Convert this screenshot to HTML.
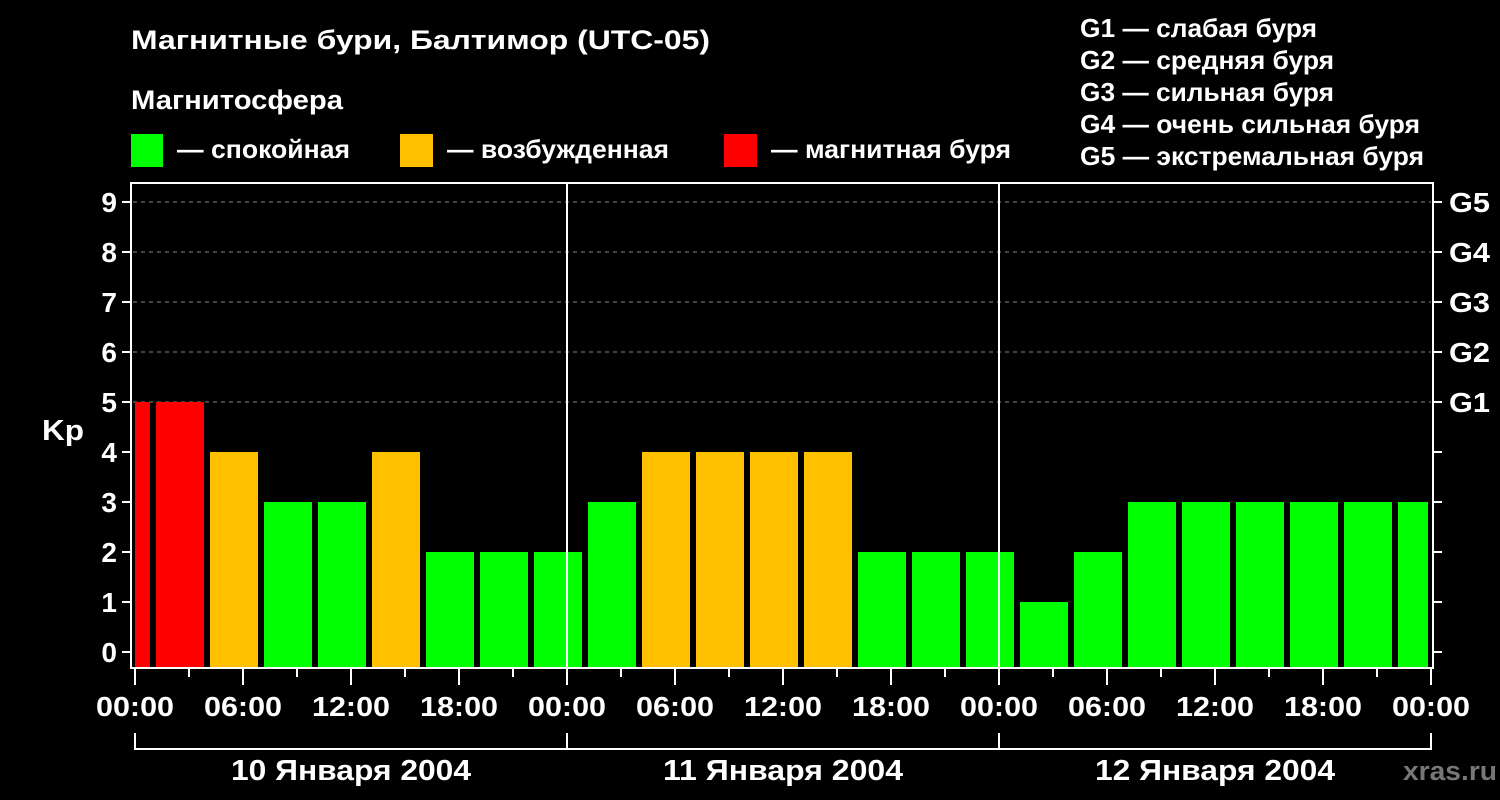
<!DOCTYPE html><html><head><meta charset="utf-8"><style>body{margin:0;background:#000;width:1500px;height:800px;overflow:hidden}svg{display:block}text{font-family:"Liberation Sans",sans-serif;font-weight:bold;fill:#fff}</style></head><body>
<svg width="1500" height="800" viewBox="0 0 1500 800">
<rect width="1500" height="800" fill="#000"/>
<text x="131" y="49" font-size="27" textLength="579" lengthAdjust="spacingAndGlyphs">Магнитные бури, Балтимор (UTC-05)</text>
<text x="131" y="109" font-size="27" textLength="212" lengthAdjust="spacingAndGlyphs">Магнитосфера</text>
<rect x="131" y="134" width="32" height="33" fill="#00ff00"/><text x="177" y="158" font-size="26" textLength="173" lengthAdjust="spacingAndGlyphs">— спокойная</text>
<rect x="400" y="134" width="33" height="33" fill="#ffc000"/><text x="447" y="158" font-size="26" textLength="222" lengthAdjust="spacingAndGlyphs">— возбужденная</text>
<rect x="724" y="134" width="33" height="33" fill="#ff0000"/><text x="771" y="158" font-size="26" textLength="240" lengthAdjust="spacingAndGlyphs">— магнитная буря</text>
<g font-size="26" lengthAdjust="spacingAndGlyphs"><text x="1080" y="37" textLength="237" lengthAdjust="spacingAndGlyphs">G1 — слабая буря</text><text x="1080" y="69" textLength="254" lengthAdjust="spacingAndGlyphs">G2 — средняя буря</text><text x="1080" y="101" textLength="254" lengthAdjust="spacingAndGlyphs">G3 — сильная буря</text><text x="1080" y="133" textLength="340" lengthAdjust="spacingAndGlyphs">G4 — очень сильная буря</text><text x="1080" y="165" textLength="344" lengthAdjust="spacingAndGlyphs">G5 — экстремальная буря</text></g>
<g stroke="#888" stroke-dasharray="4,4" stroke-width="1">
<line x1="133" y1="202" x2="1431" y2="202"/><line x1="133" y1="252" x2="1431" y2="252"/><line x1="133" y1="302" x2="1431" y2="302"/><line x1="133" y1="352" x2="1431" y2="352"/><line x1="133" y1="402" x2="1431" y2="402"/></g>
<g id="bars"></g>
<g stroke="#fff" stroke-width="2" fill="none">
<rect x="131" y="183" width="1302" height="485"/>
<line x1="567" y1="183" x2="567" y2="668"/><line x1="999" y1="183" x2="999" y2="668"/>
<path d="M135 733V749H1431V733M567 733V749M999 733V749"/>
</g>
<text x="42" y="440" font-size="29" textLength="42" lengthAdjust="spacingAndGlyphs">Kp</text>
<script>
var s='http://www.w3.org/2000/svg',svg=document.querySelector('svg');
function el(t,a,p,txt){var e=document.createElementNS(s,t);for(var k in a)e.setAttribute(k,a[k]);if(txt)e.textContent=txt;(p||svg).appendChild(e);return e}
var b=document.getElementById('bars');
var v=[5,4,3,3,4,2,2,2,3,4,4,4,4,2,2,2,1,2,3,3,3,3,3,3];
function col(x){return x>=5?'#ff0000':x==4?'#ffc000':'#00ff00'}
el('rect',{x:135,y:402,width:15,height:266,fill:'#ff0000'},b);
v.forEach(function(x,i){var X=156+54*i,w=i==23?30:48;el('rect',{x:X,y:652-50*x,width:w,height:16+50*x,fill:col(x)},b)});
for(var k=0;k<=9;k++){var y=652-50*k;el('line',{x1:122,y1:y,x2:131,y2:y,stroke:'#fff','stroke-width':2});el('line',{x1:1433,y1:y,x2:1442,y2:y,stroke:'#fff','stroke-width':2});el('text',{x:117,y:y+10,'font-size':28,'text-anchor':'end'},null,''+k)}
['G1','G2','G3','G4','G5'].forEach(function(g,i){el('text',{x:1449,y:412-50*i,'font-size':28,textLength:41,lengthAdjust:'spacingAndGlyphs'},null,g)});
var lab=['00:00','06:00','12:00','18:00'];
for(var t=0;t<=24;t++){var x=135+54*t;var major=t%2==0;el('line',{x1:x,y1:668,x2:x,y2:major?685:677,stroke:'#fff','stroke-width':2});if(major)el('text',{x:x-39,y:716,'font-size':28,textLength:78,lengthAdjust:'spacingAndGlyphs'},null,t==24?'00:00':lab[(t/2)%4])}
['10 Января 2004','11 Января 2004','12 Января 2004'].forEach(function(d,i){el('text',{x:231+432*i,y:780,'font-size':29,textLength:240,lengthAdjust:'spacingAndGlyphs'},null,d)});
el('text',{x:1403,y:780,'font-size':27,textLength:94,lengthAdjust:'spacingAndGlyphs',style:'fill:#777'},null,'xras.ru');
</script>
</svg></body></html>
